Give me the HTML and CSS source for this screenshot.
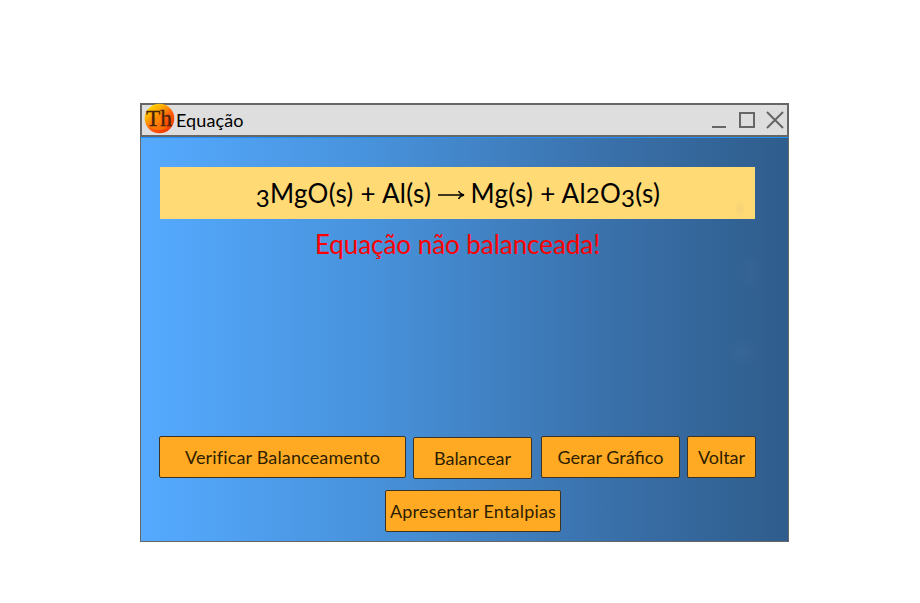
FILE: index.html
```html
<!DOCTYPE html>
<html lang="pt">
<head>
<meta charset="utf-8">
<title>Equação</title>
<link rel="stylesheet" href="styles.css">
</head>
<body>
<main class="window">
  <header class="titlebar">
    <svg class="logo" width="31" height="31" viewBox="0 0 31 31">
      <defs>
        <linearGradient id="sun" x1="0.15" y1="0.1" x2="0.8" y2="0.9">
          <stop offset="0" stop-color="#ffd500"/>
          <stop offset="0.3" stop-color="#ffa500"/>
          <stop offset="0.62" stop-color="#ff5a0a"/>
          <stop offset="1" stop-color="#f33b00"/>
        </linearGradient>
      </defs>
      <circle cx="15.5" cy="15.5" r="14.8" fill="url(#sun)"/>
      <path d="M15 13L23 25Q15 29 7 25Z" fill="#ffb400" opacity="0.35"/>
      <text class="logo-text" x="2" y="23" textLength="26" lengthAdjust="spacingAndGlyphs">Th</text>
    </svg>
    <h1 class="title">Equação</h1>
    <svg class="controls" width="76" height="22" viewBox="0 0 76 22">
      <path d="M1 18H15M29 4H43V18H29ZM56 3L72 19M72 3L56 19" fill="none" stroke="#666" stroke-width="2"/>
    </svg>
  </header>
  <section class="content">
    <p class="equation"><span class="digit deep">3</span>MgO(s) + Al(s) <svg class="arrow" width="27" height="12" viewBox="0 0 27 12"><path d="M0 6H25M20.5 2Q22 5 26 6Q22 7 20.5 10" fill="none" stroke="#000" stroke-width="1.4"/></svg> Mg(s) + Al<span class="digit">2</span>O<span class="digit deep">3</span>(s)</p>
    <p class="message">Equação não balanceada!</p>
    <div class="actions">
      <button class="btn verify">Verificar Balanceamento</button>
      <button class="btn balance">Balancear</button>
      <button class="btn chart">Gerar Gráfico</button>
      <button class="btn back">Voltar</button>
    </div>
    <button class="btn enthalpy">Apresentar Entalpias</button>
  </section>
</main>
</body>
</html>
```
FILE: styles.css
```css
* { box-sizing: border-box; }
body {
  margin: 0;
  background: #fff;
  color: #000;
  font-family: Lato, "Open Sans", sans-serif;
}
.window {
  width: 649px;
  height: 439px;
  margin: 103px 0 0 140px;
}
.titlebar {
  display: flex;
  align-items: flex-start;
  height: 34px;
  border: 2px solid #666;
  background: #dedede;
}
.logo { margin: -2px 0 0 2px; flex: none; }
.logo-text {
  font: 24px "Liberation Serif", serif;
  fill: #4a2408;
  stroke: #4a2408;
  stroke-width: 0.3px;
}
.title {
  margin: 3px 0 0 1px;
  font-size: 18px;
  line-height: 24px;
  font-weight: 400;
  letter-spacing: 0.1px;
}
.controls { margin: 4px 0 0 auto; }
.content {
  display: flex;
  flex-direction: column;
  height: 405px;
  padding: 29px 0 0 19px;
  border: 1px solid #666;
  border-top: 1px solid #1e90ff;
  background:
    radial-gradient(14px 20px at 612px 134px, #ffffff06, transparent),
    radial-gradient(18px 14px at 603px 214px, #ffffff06, transparent),
    linear-gradient(90deg, #55aaff, #4791da 37%, #396fa8 74%, #2f5d8c);
}
.equation, .message {
  width: 595px;
  margin: 0;
  white-space: nowrap;
  text-align: center;
}
.equation {
  height: 52px;
  background: radial-gradient(6px 9px at 580px 42px, #f6d27a, transparent) #ffda75;
  font-size: 26px;
  line-height: 52px;
  letter-spacing: 0.28px;
  padding-left: 1px;
}
.digit { display: inline-block; font-size: 24px; line-height: 1; transform: scaleY(0.85); transform-origin: 50% 82%; }
.deep { position: relative; top: 4px; transform: none; }
.arrow { margin: 0 -1.5px 0 0; vertical-align: 2px; }
.message {
  margin-top: 9px;
  color: #f00;
  font-size: 26px;
  line-height: 32px;
  letter-spacing: -0.05px;
}
.actions { display: flex; margin: 176px 0 0 -1px; }
.btn {
  height: 42px;
  padding: 0;
  border: 1.5px solid #3b3324;
  border-radius: 2px;
  background: #ffaa22;
  color: #2e1e00;
  font-family: inherit;
  font-size: 18px;
  line-height: 22px;
  letter-spacing: 0.15px;
  white-space: nowrap;
}
.verify { width: 247px; }
.balance { width: 119px; margin: 1px 0 0 7px; letter-spacing: 0; }
.chart { width: 139px; margin-left: 9px; letter-spacing: 0; }
.back { width: 69px; margin-left: 7px; letter-spacing: 0; }
.enthalpy { width: 176px; margin: 11px 0 0 225px; letter-spacing: 0.2px; }
```
